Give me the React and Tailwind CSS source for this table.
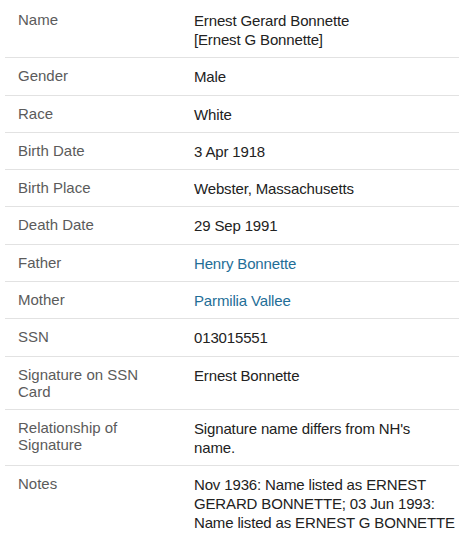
import React from 'react';

const rows = [
    { label: 'Name', value: ['Ernest Gerard Bonnette', '[Ernest G Bonnette]'], first: true },
    { label: 'Gender', value: 'Male' },
    { label: 'Race', value: 'White' },
    { label: 'Birth Date', value: '3 Apr 1918' },
    { label: 'Birth Place', value: 'Webster, Massachusetts' },
    { label: 'Death Date', value: '29 Sep 1991' },
    { label: 'Father', value: 'Henry Bonnette', link: true },
    { label: 'Mother', value: 'Parmilia Vallee', link: true },
    { label: 'SSN', value: '013015551' },
    { label: 'Signature on SSN Card', value: 'Ernest Bonnette' },
    { label: 'Relationship of Signature', value: ["Signature name differs from NH's", 'name.'] },
    { label: 'Notes', value: 'Nov 1936: Name listed as ERNEST GERARD BONNETTE; 03 Jun 1993: Name listed as ERNEST G BONNETTE', last: true },
];

const App = () => {
    return (
        <div className="w-[459px] h-[543px] bg-white overflow-hidden" style={{ fontFamily: '"Liberation Sans", Arial, sans-serif' }}>
            <div className="pl-[5px]">
                {rows.map((row) => (
                    <div
                        key={row.label}
                        className={`flex ${row.last ? '' : 'border-b border-[#e2e2e2]'} ${row.first ? 'pt-[11px]' : 'pt-[9px]'} pb-[8.3px]`}
                    >
                        {/* label column */}
                        <div className="w-[189px] shrink-0 pl-[13px] pr-[26px] text-[15px] leading-[17.5px] text-[#5b5b5b]">
                            {row.label}
                        </div>
                        {/* value column */}
                        <div
                            className={`flex-1 text-[15px] leading-[19px] tracking-[-0.15px] ${
                                row.link ? 'text-[#1f6e97]' : 'text-[#222222]'
                            }`}
                        >
                            {Array.isArray(row.value)
                                ? row.value.map((line) => <div key={line}>{line}</div>)
                                : row.value}
                        </div>
                    </div>
                ))}
            </div>
        </div>
    );
};

export default App;
